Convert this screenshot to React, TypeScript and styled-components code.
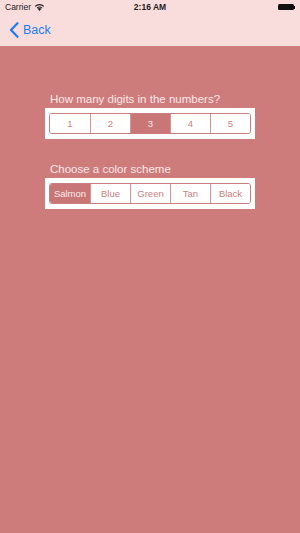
import styled, { createGlobalStyle } from 'styled-components'
import { useState } from 'react'

const GlobalStyle = createGlobalStyle`
  html, body {
    margin: 0;
    padding: 0;
    background: #cd7b7b;
  }
  body {
    font-family: "Liberation Sans", Arial, sans-serif;
  }
`

const digitOptions = ['1', '2', '3', '4', '5']
const schemeOptions = ['Salmon', 'Blue', 'Green', 'Tan', 'Black']

const Segmented = ({ options, selected, onSelect }: { options: string[]; selected: number; onSelect: (i: number) => void }) => (
  <S_Panel>
    <S_Control>
      {options.map((o, i) => (
        <S_Segment key={o} $active={i === selected} onClick={() => onSelect(i)}>
          {o}
        </S_Segment>
      ))}
    </S_Control>
  </S_Panel>
)

const App = () => {
  const [digits, setDigits] = useState(2)
  const [scheme, setScheme] = useState(0)

  return (
    <S_Page>
      <GlobalStyle />
      <S_Header>
        <S_StatusBar>
          <S_Carrier>
            Carrier
            <svg width="11" height="8" viewBox="0 0 11 8">
              <path d="M5.5 8 L3.6 5.8 A2.8 2.8 0 0 1 7.4 5.8 Z" fill="#222" />
              <path d="M2.6 4.7 A4.3 4.3 0 0 1 8.4 4.7 L7.7 5.5 A3.2 3.2 0 0 0 3.3 5.5 Z" fill="#222" />
              <path d="M0.8 2.9 A6.8 6.8 0 0 1 10.2 2.9 L9.4 3.8 A5.6 5.6 0 0 0 1.6 3.8 Z" fill="#222" />
            </svg>
          </S_Carrier>
          <S_Time>2:16 AM</S_Time>
          <S_Battery>
            <S_BatteryBody />
            <S_BatteryTip />
          </S_Battery>
        </S_StatusBar>
        <S_NavBar>
          <S_Back>
            <svg width="10" height="16" viewBox="0 0 10 16">
              <path d="M8.5 1.2 L2 8 L8.5 14.8" fill="none" stroke="#1a7cf0" strokeWidth="2.2" strokeLinecap="round" strokeLinejoin="round" />
            </svg>
            Back
          </S_Back>
        </S_NavBar>
      </S_Header>
      <S_Content>
        <S_Group>
          <S_Label>How many digits in the numbers?</S_Label>
          <Segmented options={digitOptions} selected={digits} onSelect={setDigits} />
        </S_Group>
        <S_Group>
          <S_Label>Choose a color scheme</S_Label>
          <Segmented options={schemeOptions} selected={scheme} onSelect={setScheme} />
        </S_Group>
      </S_Content>
    </S_Page>
  )
}

export default App

const S_Page = styled.div`
  width: 300px;
  height: 533px;
  background: #cd7b7b;
  display: flex;
  flex-direction: column;
`

const S_Header = styled.div`
  background: #f9dcdc;
  height: 46px;
  border-bottom: 1px solid #f6e2e0;
  box-sizing: border-box;
`

const S_StatusBar = styled.div`
  height: 14px;
  display: flex;
  align-items: center;
  justify-content: space-between;
  padding: 0 5px;
  position: relative;
  font-size: 8.5px;
  color: #222;
`

const S_Carrier = styled.div`
  display: flex;
  align-items: center;
  gap: 3px;
`

const S_Time = styled.div`
  position: absolute;
  left: 0;
  right: 0;
  text-align: center;
  font-weight: bold;
`

const S_Battery = styled.div`
  display: flex;
  align-items: center;
`

const S_BatteryBody = styled.div`
  width: 16px;
  height: 6px;
  background: #111;
  border-radius: 1.5px;
`

const S_BatteryTip = styled.div`
  width: 1px;
  height: 3px;
  background: #111;
`

const S_NavBar = styled.div`
  height: 31px;
  display: flex;
  align-items: center;
  padding-left: 9px;
`

const S_Back = styled.div`
  display: flex;
  align-items: center;
  gap: 4px;
  color: #1a7cf0;
  font-size: 12.5px;
`

const S_Content = styled.div`
  display: flex;
  flex-direction: column;
  gap: 24px;
  padding: 47px 45px 0 45px;
`

const S_Group = styled.div`
  display: flex;
  flex-direction: column;
  gap: 3px;
`

const S_Label = styled.div`
  color: #fbe8e8;
  font-size: 11.5px;
  padding-left: 5px;
`

const S_Panel = styled.div`
  background: #ffffff;
  padding: 5px 4px;
`

const S_Control = styled.div`
  display: grid;
  grid-template-columns: repeat(5, 1fr);
  border: 1px solid #cc7d7d;
  border-radius: 3px;
  overflow: hidden;
  height: 21px;
  box-sizing: border-box;
`

const S_Segment = styled.div<{ $active: boolean }>`
  display: flex;
  align-items: center;
  justify-content: center;
  font-size: 9.5px;
  color: ${p => (p.$active ? '#fdeaea' : '#cd8080')};
  background: ${p => (p.$active ? '#c87676' : '#ffffff')};
  border-left: 1px solid #d89595;
  cursor: pointer;

  &:first-child {
    border-left: none;
  }
`
